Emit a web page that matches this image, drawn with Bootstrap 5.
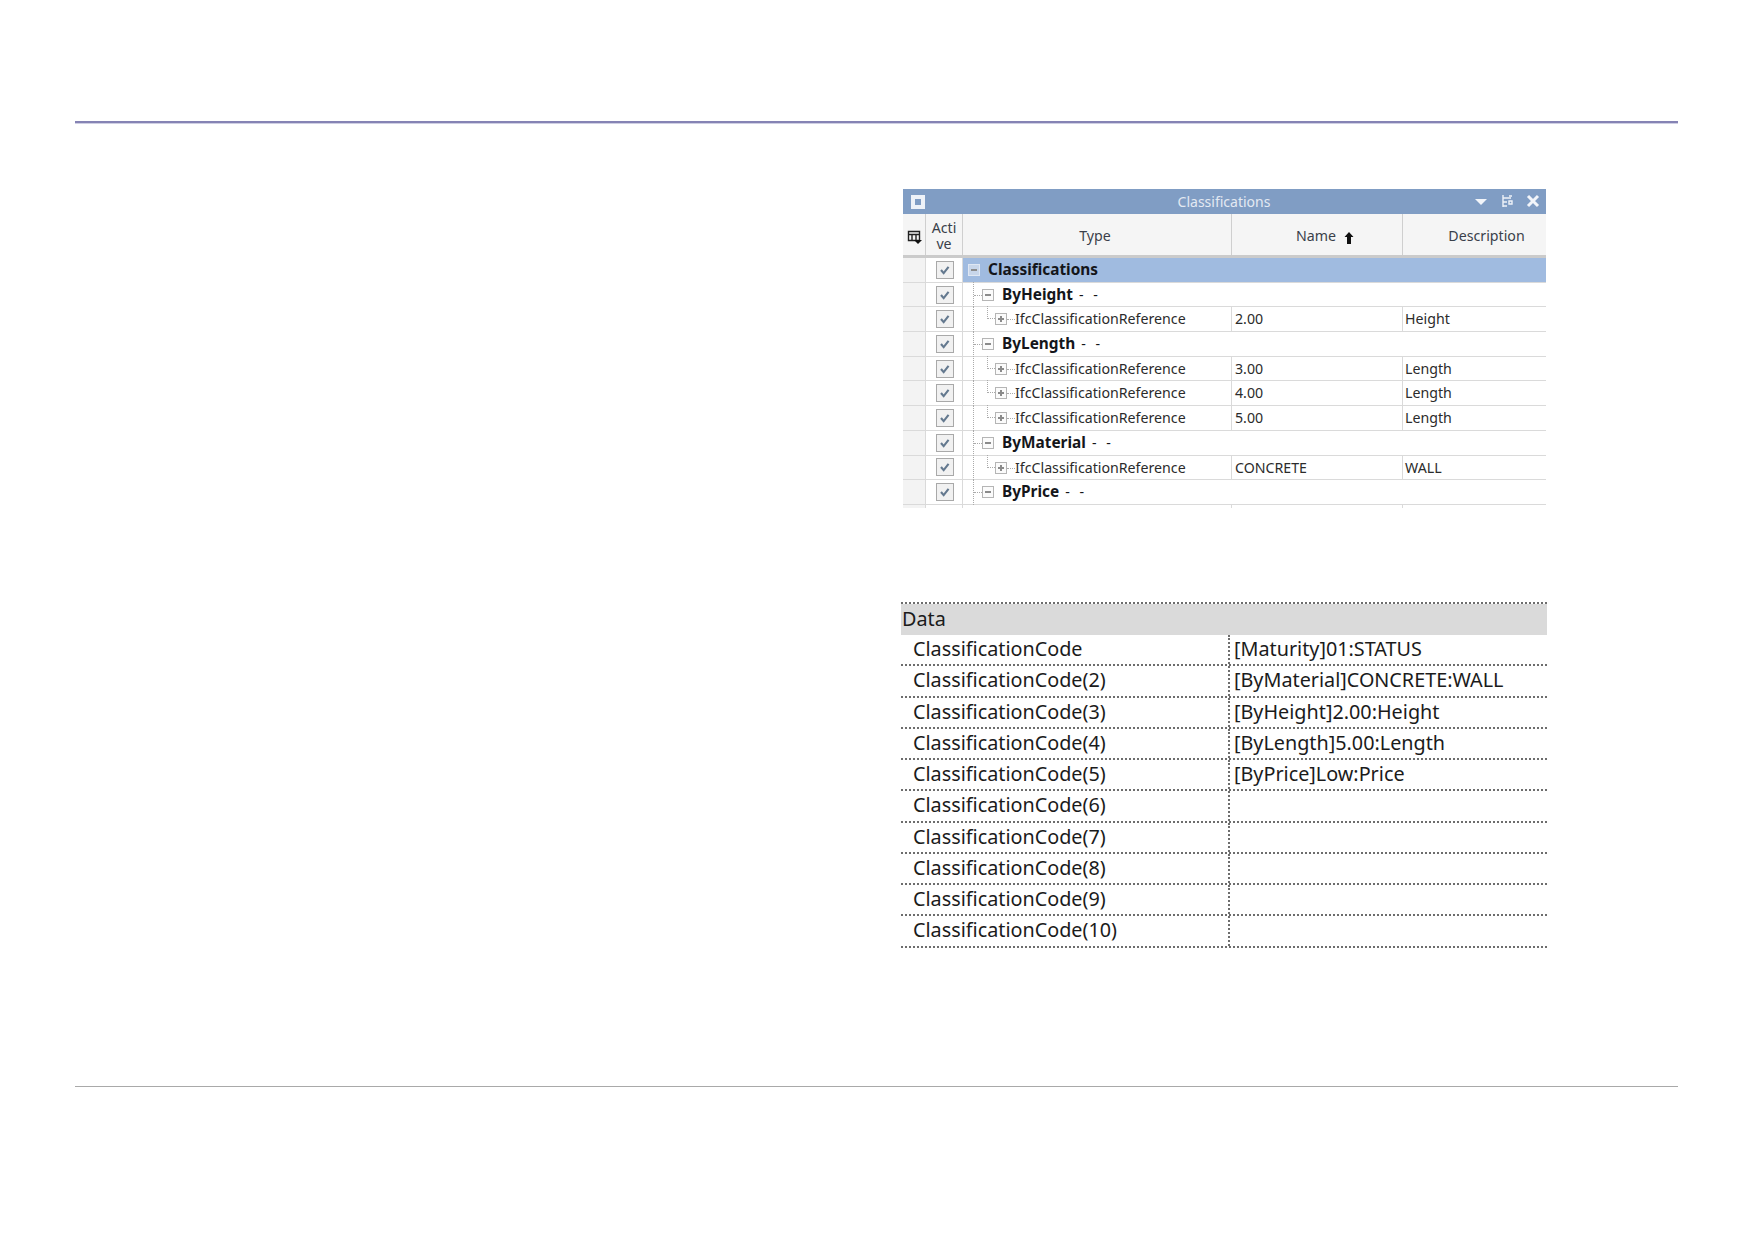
<!DOCTYPE html>
<html lang="en">
<head>
<meta charset="utf-8">
<title>Classifications</title>
<link href="https://cdn.jsdelivr.net/npm/bootstrap@5.3.0/dist/css/bootstrap.min.css" rel="stylesheet">
<style>
html,body{height:100%;background:#fff;}
.sheet{padding:121px 74px 0 75px;height:1239px;overflow:hidden;font-family:"Noto Sans","Liberation Sans",sans-serif;}
.rule-top{height:2px;background:#8583b4;box-shadow:0 1px 0 #cfcfe4;}
.rule-bottom{height:1px;background:#a9a9a9;margin-top:138px;}
.shot{margin-left:828px;width:643px;margin-top:66px;height:319px;overflow:hidden;font-size:14.2px;color:#2b2b2b;}
.titlebar{height:25px;background:#809dc4;color:#e3e9f2;padding:0 6px 0 8px;}
.title-txt{flex:1;text-align:center;margin-left:49px;font-size:14px;line-height:24px;}
.win-square{width:14px;height:14px;background:#eef2f8;display:flex;align-items:center;justify-content:center;}
.win-square span{width:6px;height:6px;background:#809dc4;}
.win-tools{gap:12px;margin-top:-2px;}
.gridhead,.gridrow,.stub{display:grid;grid-template-columns:23px 37px 269px 171px 143px;}
.gridhead{height:44px;background:#f5f5f5;border-bottom:3px solid #cbcbcb;text-align:center;color:#3a3f4a;}
.gridhead>div{border-right:1px solid #cfcfcf;display:flex;align-items:center;justify-content:center;padding-top:2px;}
.gridhead>div:last-child{border-right:0;}
.active-head{line-height:16px;padding:0 4px;word-break:break-all;}
.head-type{padding-right:4px;}
.head-name{padding-left:16px;}
.head-desc{padding-left:24px;}
.gridrow{height:24.7px;border-bottom:1px solid #dadada;line-height:23px;}
.stub{height:4px;}
.stub>div{border-right:1px solid #dadada;}
.stub>div:first-child{background:#f3f3f3;}
.stub>div:last-child{border-right:0;}
.gutter{background:#f3f3f3;border-right:1px solid #dadada;}
.checkcell{border-right:1px solid #dadada;display:flex;align-items:center;justify-content:center;padding-left:1px;}
.tick{width:18px;height:18px;border:1px solid #a9a9a9;background:#f1f1f1;display:block;}
.typecell{grid-column:span 1;position:relative;white-space:nowrap;border-right:1px solid #dadada;}
.spanning{grid-column:span 3;border-right:0;}
.valcell{padding-left:3px;border-right:1px solid #dadada;}
.valcell:last-child{border-right:0;padding-left:2px;}
.selected{background:#a0bbe0;color:#10141c;}
.group{font-weight:700;color:#14161a;font-size:15.4px;}
.group em{font-style:normal;font-weight:400;font-size:14.2px;word-spacing:6px;margin-left:2px;}
.xbox{position:absolute;top:6px;width:12px;height:12px;border:1px solid #b5b5b5;background:#fbfbfb;}
.xbox::before{content:"";position:absolute;left:2px;right:2px;top:4px;height:2px;background:#8b8b8b;}
.xbox.plus::after{content:"";position:absolute;top:2px;bottom:2px;left:4px;width:2px;background:#8b8b8b;}
.lv0 .xbox{left:5px;background:#c8d6ea;border-color:#dfe7f3;}
.lv1 .xbox{left:19px;}
.lv2 .xbox{left:32px;}
.label{position:absolute;top:0;}
.lv0 .label{left:25px;}
.lv1 .label{left:39px;}
.lv2 .label{left:52px;}
.lv1::before,.lv2::before{content:"";position:absolute;left:10px;top:-1px;bottom:-1px;border-left:1px dotted #aaa;}
.lv1::after{content:"";position:absolute;left:11px;width:8px;top:12px;border-top:1px dotted #aaa;}
.lv2::after{content:"";position:absolute;left:24px;width:8px;top:-1px;height:13px;border-left:1px dotted #aaa;border-bottom:1px dotted #aaa;}
.dash{position:absolute;left:44px;width:8px;top:12px;border-top:1px dotted #aaa;}
.datasheet{margin-left:826px;width:646px;margin-top:94px;font-size:19.8px;color:#1b1b1b;}
.data-top{border-top:2px dotted #6d6d6d;height:2px;}
.data-head{background:#dadada;height:31px;line-height:30px;padding-left:1px;}
.data-row{display:grid;grid-template-columns:329px 317px;height:31.25px;line-height:27px;border-bottom:2px dotted #6d6d6d;}
.data-row>div:first-child{padding-left:12px;border-right:2px dotted #6d6d6d;}
.data-row>div:last-child{padding-left:4px;}
.menu-icon{margin-top:3px;}
</style>
</head>
<body>
<div class="sheet">
  <div class="rule-top"></div>

  <div class="shot">
    <div class="titlebar d-flex align-items-center">
      <div class="win-square"><span></span></div>
      <div class="title-txt">Classifications</div>
      <div class="win-tools d-flex align-items-center">
        <svg width="14" height="14" viewBox="0 0 14 14"><path d="M1 5h12L7 11z" fill="#f2f5fa"/></svg>
        <svg width="14" height="14" viewBox="0 0 14 14"><path d="M3 1v12M3 4h8M3 8h4M3 12h4M9 7h3v3H9zM9 2h3" stroke="#eef2f8" stroke-width="1.4" fill="none"/></svg>
        <svg width="14" height="14" viewBox="0 0 14 14"><path d="M2 2l10 10M12 2L2 12" stroke="#f2f5fa" stroke-width="3"/></svg>
      </div>
    </div>
    <div class="gridhead">
      <div><svg class="menu-icon" width="15" height="15" viewBox="0 0 15 15"><path d="M1.500 1.500h11v9h-11zM1.500 4.500h11M5 4.500v6M9 4.500v6" stroke="#222" stroke-width="1.400" fill="none"/><path d="M7 10h8l-4 4z" fill="#111"/></svg></div>
      <div class="active-head">Active</div>
      <div class="head-type">Type</div>
      <div class="head-name"><span>Name</span><svg class="ms-2 mt-1" width="10" height="12" viewBox="0 0 10 12"><path d="M5 0l4.500 5H7v7H3V5H.5z" fill="#111"/></svg></div>
      <div class="head-desc">Description</div>
    </div>

    <div class="gridrow"><div class="gutter"></div><div class="checkcell"><svg class="tick" viewBox="0 0 18 18"><path d="M4.500 9l3 3.500L13 5.500" stroke="#64798f" stroke-width="2.400" fill="none"/></svg></div><div class="typecell spanning selected group lv0"><span class="xbox"></span><span class="label">Classifications</span></div></div>

    <div class="gridrow"><div class="gutter"></div><div class="checkcell"><svg class="tick" viewBox="0 0 18 18"><path d="M4.500 9l3 3.500L13 5.500" stroke="#64798f" stroke-width="2.400" fill="none"/></svg></div><div class="typecell spanning group lv1"><span class="xbox"></span><span class="label">ByHeight <em>- -</em></span></div></div>

    <div class="gridrow"><div class="gutter"></div><div class="checkcell"><svg class="tick" viewBox="0 0 18 18"><path d="M4.500 9l3 3.500L13 5.500" stroke="#64798f" stroke-width="2.400" fill="none"/></svg></div><div class="typecell lv2"><span class="xbox plus"></span><span class="dash"></span><span class="label">IfcClassificationReference</span></div><div class="valcell">2.00</div><div class="valcell">Height</div></div>

    <div class="gridrow"><div class="gutter"></div><div class="checkcell"><svg class="tick" viewBox="0 0 18 18"><path d="M4.500 9l3 3.500L13 5.500" stroke="#64798f" stroke-width="2.400" fill="none"/></svg></div><div class="typecell spanning group lv1"><span class="xbox"></span><span class="label">ByLength <em>- -</em></span></div></div>

    <div class="gridrow"><div class="gutter"></div><div class="checkcell"><svg class="tick" viewBox="0 0 18 18"><path d="M4.500 9l3 3.500L13 5.500" stroke="#64798f" stroke-width="2.400" fill="none"/></svg></div><div class="typecell lv2"><span class="xbox plus"></span><span class="dash"></span><span class="label">IfcClassificationReference</span></div><div class="valcell">3.00</div><div class="valcell">Length</div></div>

    <div class="gridrow"><div class="gutter"></div><div class="checkcell"><svg class="tick" viewBox="0 0 18 18"><path d="M4.500 9l3 3.500L13 5.500" stroke="#64798f" stroke-width="2.400" fill="none"/></svg></div><div class="typecell lv2"><span class="xbox plus"></span><span class="dash"></span><span class="label">IfcClassificationReference</span></div><div class="valcell">4.00</div><div class="valcell">Length</div></div>

    <div class="gridrow"><div class="gutter"></div><div class="checkcell"><svg class="tick" viewBox="0 0 18 18"><path d="M4.500 9l3 3.500L13 5.500" stroke="#64798f" stroke-width="2.400" fill="none"/></svg></div><div class="typecell lv2"><span class="xbox plus"></span><span class="dash"></span><span class="label">IfcClassificationReference</span></div><div class="valcell">5.00</div><div class="valcell">Length</div></div>

    <div class="gridrow"><div class="gutter"></div><div class="checkcell"><svg class="tick" viewBox="0 0 18 18"><path d="M4.500 9l3 3.500L13 5.500" stroke="#64798f" stroke-width="2.400" fill="none"/></svg></div><div class="typecell spanning group lv1"><span class="xbox"></span><span class="label">ByMaterial <em>- -</em></span></div></div>

    <div class="gridrow"><div class="gutter"></div><div class="checkcell"><svg class="tick" viewBox="0 0 18 18"><path d="M4.500 9l3 3.500L13 5.500" stroke="#64798f" stroke-width="2.400" fill="none"/></svg></div><div class="typecell lv2"><span class="xbox plus"></span><span class="dash"></span><span class="label">IfcClassificationReference</span></div><div class="valcell">CONCRETE</div><div class="valcell">WALL</div></div>

    <div class="gridrow"><div class="gutter"></div><div class="checkcell"><svg class="tick" viewBox="0 0 18 18"><path d="M4.500 9l3 3.500L13 5.500" stroke="#64798f" stroke-width="2.400" fill="none"/></svg></div><div class="typecell spanning group lv1"><span class="xbox"></span><span class="label">ByPrice <em>- -</em></span></div></div>

    <div class="stub"><div></div><div></div><div></div><div></div><div></div></div>
  </div>

  <div class="datasheet">
    <div class="data-top"></div>
    <div class="data-head">Data</div>
    <div class="data-row"><div>ClassificationCode</div><div>[Maturity]01:STATUS</div></div>
    <div class="data-row"><div>ClassificationCode(2)</div><div>[ByMaterial]CONCRETE:WALL</div></div>
    <div class="data-row"><div>ClassificationCode(3)</div><div>[ByHeight]2.00:Height</div></div>
    <div class="data-row"><div>ClassificationCode(4)</div><div>[ByLength]5.00:Length</div></div>
    <div class="data-row"><div>ClassificationCode(5)</div><div>[ByPrice]Low:Price</div></div>
    <div class="data-row"><div>ClassificationCode(6)</div><div></div></div>
    <div class="data-row"><div>ClassificationCode(7)</div><div></div></div>
    <div class="data-row"><div>ClassificationCode(8)</div><div></div></div>
    <div class="data-row"><div>ClassificationCode(9)</div><div></div></div>
    <div class="data-row"><div>ClassificationCode(10)</div><div></div></div>
  </div>

  <div class="rule-bottom"></div>
</div>
<script src="https://cdn.jsdelivr.net/npm/bootstrap@5.3.0/dist/js/bootstrap.bundle.min.js"></script>
</body>
</html>
